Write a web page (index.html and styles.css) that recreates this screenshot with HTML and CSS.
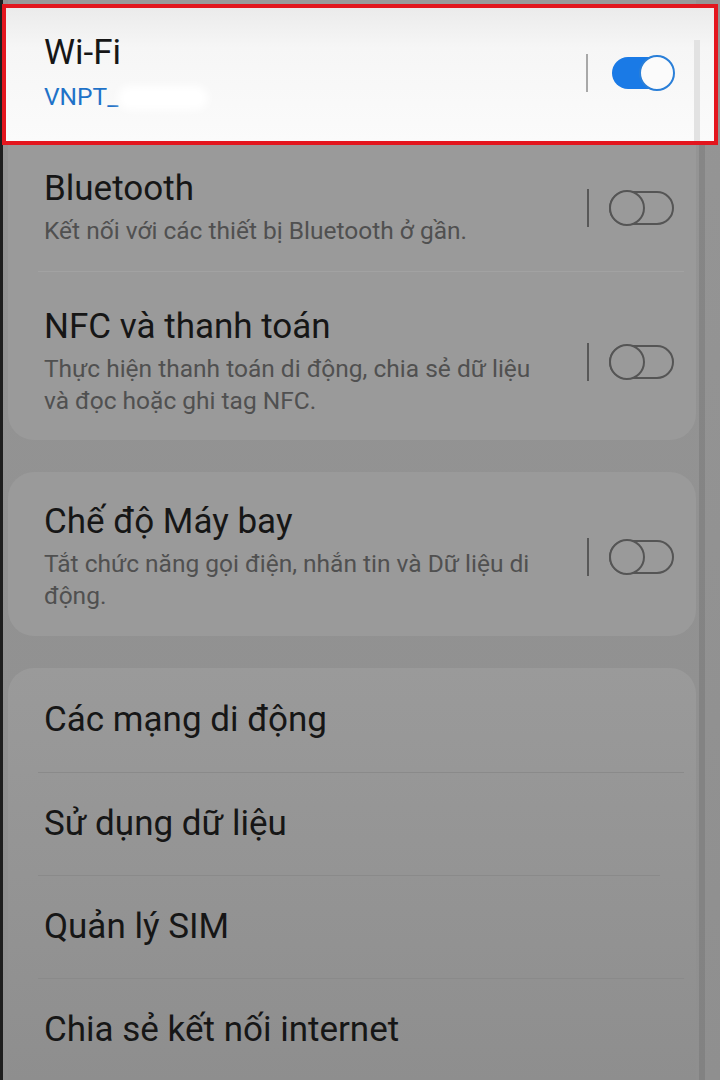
FILE: index.html
```html
<!DOCTYPE html>
<html lang="vi">
<head>
<meta charset="utf-8">
<title>Kết nối</title>
<link rel="stylesheet" href="styles.css">
</head>
<body>
<div class="screen">
  <div class="scrollbar"></div>
  <div class="card card-first">
    <div class="row wifi">
      <div class="text">
        <div class="title">Wi-Fi</div>
        <div class="sub sub-blue">VNPT_<span class="blur"></span></div>
      </div>
      <div class="sep sep-light"></div>
      <div class="switch on"><span class="knob"></span></div>
    </div>
    <div class="row bt">
      <div class="text">
        <div class="title">Bluetooth</div>
        <div class="sub">Kết nối với các thiết bị Bluetooth ở gần.</div>
      </div>
      <div class="sep"></div>
      <div class="switch"><span class="knob"></span></div>
    </div>
    <div class="divider divider-light"></div>
    <div class="row nfc">
      <div class="text">
        <div class="title">NFC và thanh toán</div>
        <div class="sub">Thực hiện thanh toán di động, chia sẻ dữ liệu<br>và đọc hoặc ghi tag NFC.</div>
      </div>
      <div class="sep"></div>
      <div class="switch"><span class="knob"></span></div>
    </div>
  </div>

  <div class="card card-mid">
    <div class="row plane">
      <div class="text">
        <div class="title">Chế độ Máy bay</div>
        <div class="sub">Tắt chức năng gọi điện, nhắn tin và Dữ liệu di<br>động.</div>
      </div>
      <div class="sep"></div>
      <div class="switch"><span class="knob"></span></div>
    </div>
  </div>

  <div class="card card-last">
    <div class="item item-first"><div class="title">Các mạng di động</div></div>
    <div class="divider"></div>
    <div class="item"><div class="title">Sử dụng dữ liệu</div></div>
    <div class="divider divider-short"></div>
    <div class="item"><div class="title">Quản lý SIM</div></div>
    <div class="divider"></div>
    <div class="item"><div class="title">Chia sẻ kết nối internet</div></div>
  </div>
</div>
</body>
</html>
```
FILE: styles.css
```css
* { box-sizing: border-box; }
html, body {
  margin: 0;
  padding: 0;
  width: 720px;
  height: 1080px;
  overflow: hidden;
  background: #939393;
  font-family: Roboto, "Noto Sans", "Liberation Sans", sans-serif;
}
.screen {
  position: relative;
  width: 720px;
  height: 1080px;
  border-left: 3px solid #1e1e1e;
  padding: 0 24px 0 5px;
  background: linear-gradient(#959595, #8f8f8f);
  display: flex;
  flex-direction: column;
  gap: 32px;
}
.scrollbar {
  position: absolute;
  left: 696px;
  top: 36px;
  width: 6px;
  height: 1044px;
  background: rgba(0, 0, 0, 0.09);
  z-index: 1;
}
.card {
  background: #9a9a9a;
  border-radius: 26px;
  display: flex;
  flex-direction: column;
  flex: none;
}
.card-first {
  border-radius: 0 0 26px 26px;
  height: 440px;
}
.card-mid { height: 164px; }
.card-last {
  flex: 1;
  border-radius: 26px 26px 0 0;
  background: linear-gradient(#9a9a9a, #8e8e8e);
}
.row {
  display: flex;
  align-items: center;
  padding-left: 36px;
  padding-right: 22px;
}
.text { flex: 1; min-width: 0; }
.title {
  font-size: 35px;
  line-height: 40px;
  color: #161616;
  white-space: nowrap;
}
.sub {
  margin-top: 6px;
  font-size: 24.5px;
  line-height: 32px;
  color: #505050;
  white-space: nowrap;
}
.sub-blue {
  color: #1f72c8;
  margin-top: 8px;
}
.blur {
  display: inline-block;
  width: 90px;
  height: 24px;
  vertical-align: middle;
  background: #ffffff;
  border-radius: 12px;
  filter: blur(4px);
}
.wifi {
  position: relative;
  z-index: 2;
  margin: 4px -22px 0 -6px;
  height: 142px;
  border: 4px solid #e3161e;
  background: linear-gradient(#ebebeb, #f6f6f6 30%, #fbfbfb);
  padding-left: 38px;
  padding-right: 40px;
  padding-bottom: 4px;
}
.wifi::after {
  content: "";
  position: absolute;
  right: 14px;
  top: 32px;
  bottom: 0;
  width: 6px;
  background: #e2e2e2;
}
.bt {
  padding-top: 24px;
  padding-bottom: 24px;
}
.nfc {
  padding-top: 35px;
  padding-bottom: 23px;
}
.plane {
  padding-top: 30px;
  padding-bottom: 24px;
}
.sep {
  width: 2px;
  height: 38px;
  background: #585858;
  margin-right: 20px;
  flex: none;
}
.wifi .sep { margin-right: 24px; }
.sep-light { background: #a8a8a8; }
.switch {
  position: relative;
  width: 65px;
  height: 34px;
  border: 2px solid #555;
  border-radius: 17px;
  flex: none;
}
.switch .knob {
  position: absolute;
  left: -2px;
  top: -3px;
  width: 36px;
  height: 36px;
  border: 2px solid #555;
  border-radius: 50%;
  background: #9a9a9a;
}
.switch.on {
  width: 62px;
  height: 32px;
  border: none;
  background: #1a7ae6;
  border-radius: 16px;
}
.switch.on .knob {
  left: auto;
  right: -1px;
  top: -2px;
  background: #fbfbfb;
  border-color: #2a7fd8;
}
.divider {
  height: 1px;
  background: #a2a2a2;
  margin: 0 12px 0 30px;
  flex: none;
}
.card-last .divider { background: #8a8a8a; }
.divider-short { margin-right: 36px; }
.item {
  height: 102px;
  display: flex;
  align-items: center;
  padding-left: 36px;
  flex: none;
}
.item-first { height: 104px; }
```
